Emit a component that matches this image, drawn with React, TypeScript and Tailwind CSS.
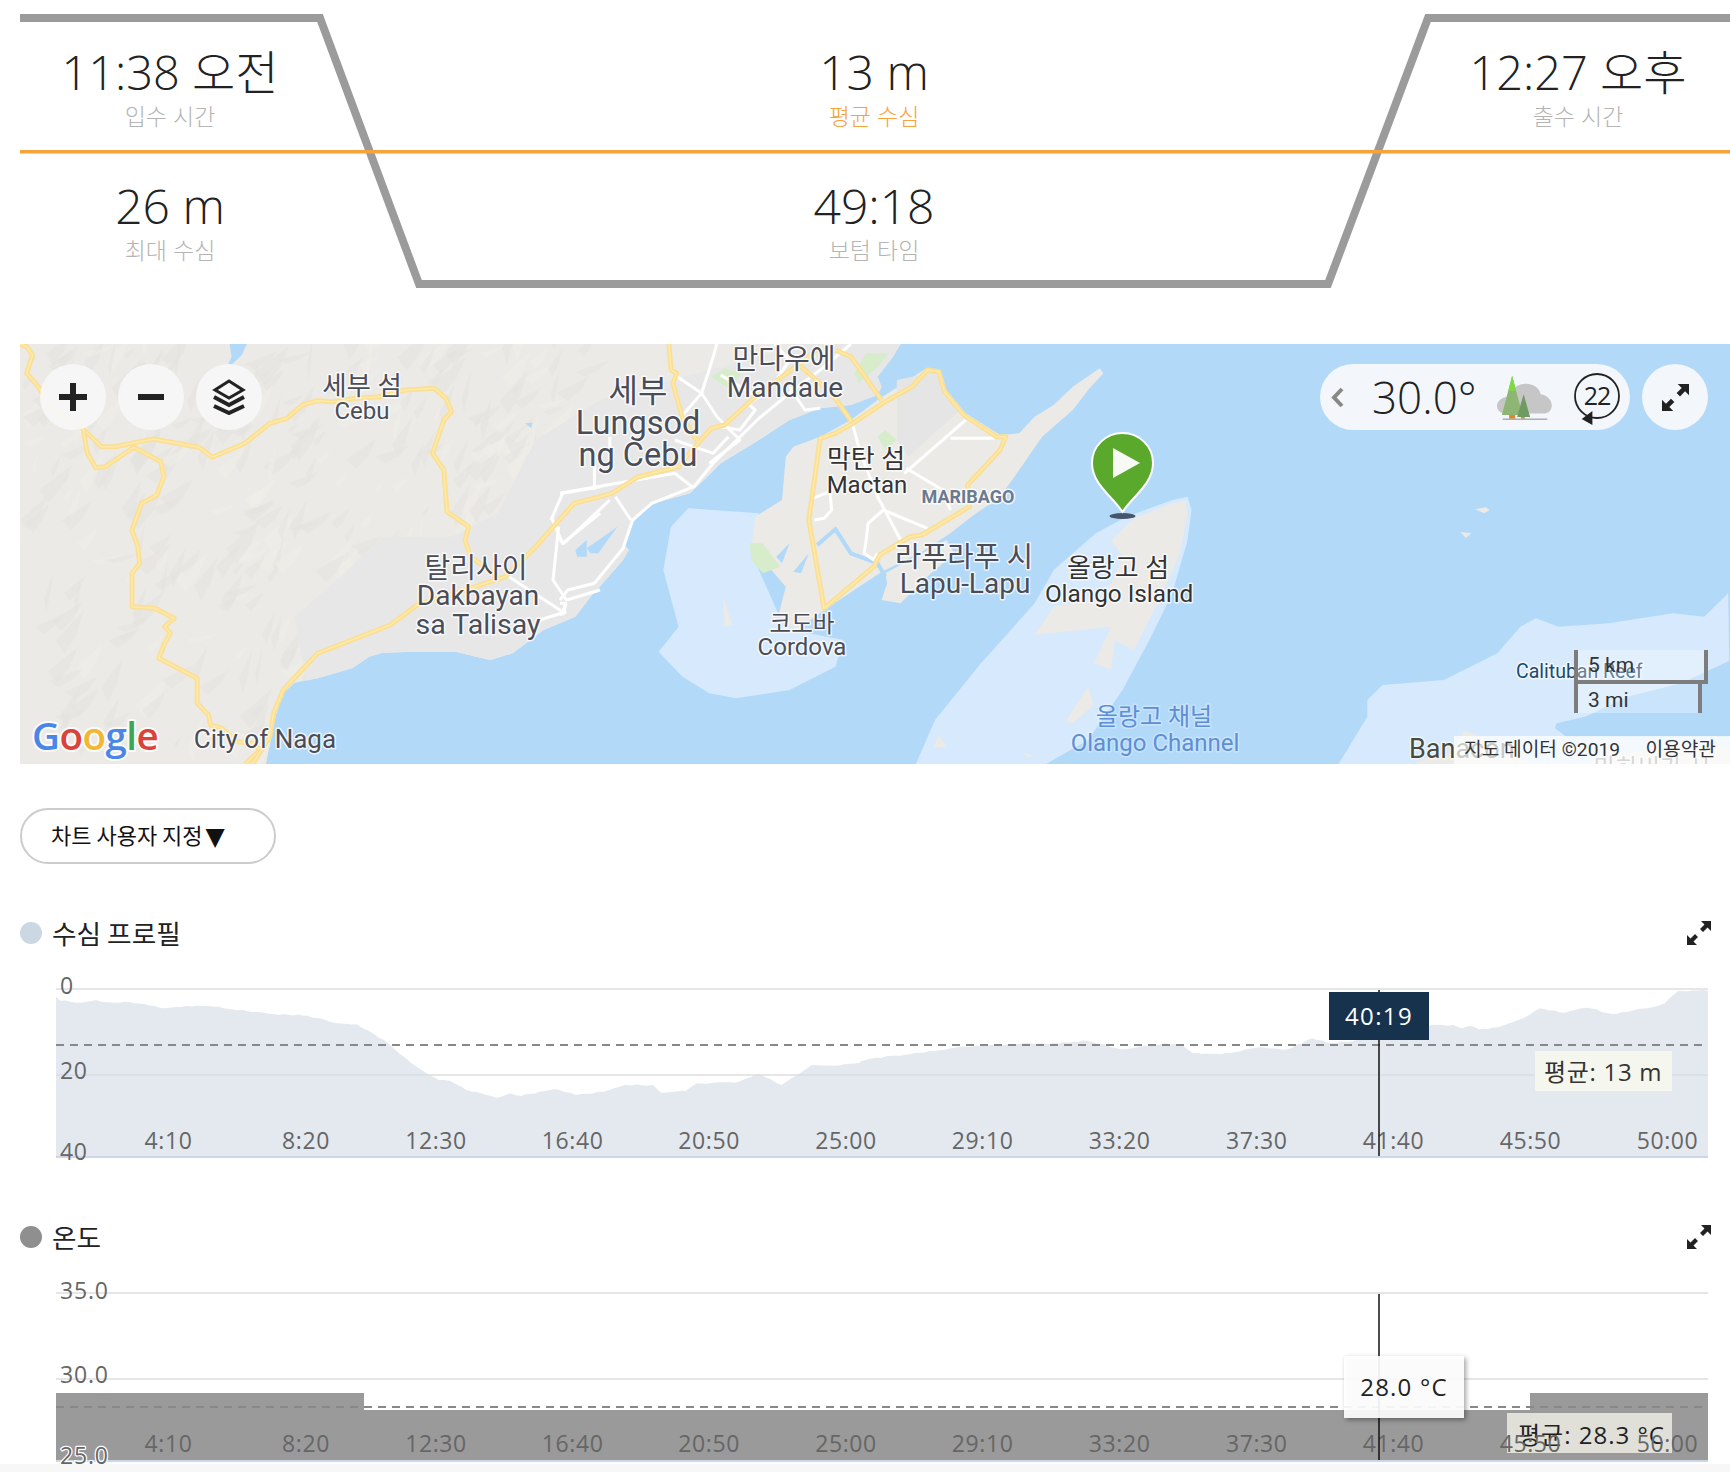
import React from "react";

const FONT = "'Open Sans','Noto Sans CJK KR',sans-serif";
const MAP_FONT = "Roboto,'Noto Sans CJK KR',sans-serif";

type Pt = number[];

// the map was traced from crops, so points come in crop coordinates
const P = (ox: number, pts: Pt[]) =>
  pts.map(([x, y]) => `${(ox + x / 2.613).toFixed(1)},${(340 + y / 3).toFixed(1)}`).join(" ");
const A = (pts: Pt[]) => P(0, pts);
const B = (pts: Pt[]) => P(560, pts);
const C = (pts: Pt[]) => P(1130, pts);

const seeded = (seed: number) => {
  let s = seed;
  return () => {
    s = (s * 16807) % 2147483647;
    return s / 2147483647;
  };
};

const cebuLand =
  "20,344 " +
  B([[890, 12], [870, 50], [830, 110], [840, 140], [830, 165], [760, 195], [680, 205], [600, 240], [520, 300], [420, 370], [385, 410], [340, 460], [230, 495], [190, 540], [165, 610], [180, 630], [165, 660], [100, 745], [80, 770], [40, 830], [0, 850]]) +
  " " +
  A([[1420, 870], [1340, 940], [1280, 960], [1190, 935], [1080, 935], [1000, 938], [965, 950], [920, 985], [830, 1015], [770, 1028], [740, 1060], [720, 1130], [695, 1272]]) +
  " 20,764";

const yellowRoads: string[] = [
  A([[52, 12], [70, 20], [85, 45], [70, 100], [100, 140], [130, 200], [215, 265], [265, 320], [300, 320], [400, 297], [520, 322], [555, 352], [640, 310], [705, 250], [750, 235], [790, 195], [830, 182], [870, 185], [930, 175], [990, 170], [1060, 150], [1135, 145], [1165, 175], [1180, 215], [1160, 240], [1130, 340], [1160, 390], [1168, 515], [1225, 560], [1215, 600], [1230, 650], [1300, 710]]),
  A([[218, 270], [228, 340], [250, 383], [275, 380], [350, 322], [420, 365], [428, 410], [410, 465], [370, 490], [345, 570], [360, 620], [365, 670], [345, 700], [345, 800], [405, 805], [455, 835], [430, 860], [445, 880], [430, 910], [415, 955], [515, 1015], [515, 1090], [545, 1125], [550, 1155], [580, 1165], [620, 1205], [660, 1210], [680, 1230], [640, 1272]]),
  A([[660, 1272], [705, 1190], [715, 1120], [740, 1050], [830, 940], [1020, 855], [1090, 795], [1230, 745], [1320, 710], [1400, 620], [1500, 490], [1568, 470]]),
  B([[104, 470], [135, 460], [205, 410], [310, 380], [360, 310], [395, 265], [430, 255], [510, 170], [610, 85], [640, 60], [680, 20]]),
  B([[285, 12], [290, 90], [305, 100], [295, 130], [320, 235], [360, 305]]),
  B([[720, 30], [760, 50], [840, 180]]),
  B([[630, 80], [710, 160], [765, 250]]),
  B([[680, 295], [720, 280], [765, 250], [850, 185], [920, 140], [960, 90], [990, 95], [1005, 155], [1055, 225], [1140, 290], [1165, 290], [1150, 330], [1065, 435], [1070, 500], [945, 585], [915, 590], [835, 645], [820, 680], [690, 805], [650, 540], [680, 295]]),
];

const whiteRoads: string[] = [
  B([[300, 105], [370, 160], [410, 230], [470, 300], [390, 370]]),
  B([[410, 12], [395, 70], [370, 160], [310, 240]]),
  B([[760, 12], [680, 90], [610, 150], [520, 235], [400, 370], [350, 440], [240, 490], [190, 540], [165, 625], [90, 730], [20, 750], [0, 780]]),
  B([[0, 460], [150, 430], [300, 400], [345, 440]]),
  B([[145, 470], [185, 540]]),
  B([[90, 380], [90, 450]]),
  B([[130, 290], [130, 380]]),
  B([[490, 190], [510, 210], [470, 270], [420, 260]]),
  B([[0, 600], [10, 610], [130, 480]]),
  B([[0, 790], [15, 790], [10, 820], [0, 825]]),
  B([[560, 12], [600, 60], [560, 130], [470, 215]]),
  B([[420, 105], [500, 160], [560, 130]]),
  B([[300, 300], [400, 340], [440, 290]]),
  B([[600, 140], [640, 210], [680, 205]]),
  B([[765, 255], [785, 340], [830, 470], [890, 600]]),
  B([[900, 400], [1060, 240]]),
  B([[1020, 295], [1135, 295]]),
  B([[905, 385], [1000, 450], [1020, 510]]),
  B([[660, 475], [705, 455], [710, 510], [690, 535], [665, 540]]),
  B([[800, 600], [805, 550], [845, 510], [960, 565]]),
  B([[800, 600], [795, 640], [820, 660], [830, 640]]),
  A([[1440, 540], [1470, 460], [1568, 440]]),
  A([[1440, 530], [1470, 610], [1568, 520]]),
  A([[1460, 560], [1445, 720], [1480, 780], [1568, 750]]),
  A([[1330, 710], [1470, 815], [1480, 790]]),
  A([[1410, 840], [1480, 815]]),
];

// hill shading is only texture, so a seeded scatter of small shards will do
function makeTerrain() {
  const r = seeded(17);
  const out: { pts: string; fill: string }[] = [];
  for (let i = 0; i < 420; i++) {
    const x = 20 + r() * 560;
    const y = 344 + Math.pow(r(), 1.2) * 410;
    const w = 6 + r() * 30;
    const h = 8 + r() * 30;
    out.push({
      pts: `${x.toFixed(0)},${y.toFixed(0)} ${(x + w).toFixed(0)},${(y - h * 0.8).toFixed(0)} ${(x + w * 0.7).toFixed(0)},${(y - h * 0.1).toFixed(0)} ${(x + w * 0.3).toFixed(0)},${(y + h * 0.4).toFixed(0)}`,
      fill: i % 3 === 0 ? "#f1efe8" : "#e3e3de",
    });
  }
  return out;
}
const terrain = makeTerrain();

const labels = [
  { t: "세부 섬", x: 362, y: 395, s: 26.5 },
  { t: "Cebu", x: 362, y: 419, s: 24 },
  { t: "탈리사이", x: 476, y: 578, s: 28 },
  { t: "Dakbayan", x: 478, y: 605, s: 28 },
  { t: "sa Talisay", x: 478, y: 634, s: 28.5 },
  { t: "City of Naga", x: 265, y: 748, s: 26 },
  { t: "세부", x: 638, y: 402, s: 32 },
  { t: "Lungsod", x: 638, y: 434, s: 32.5 },
  { t: "ng Cebu", x: 638, y: 466, s: 32.5 },
  { t: "만다우에", x: 784, y: 369, s: 28 },
  { t: "Mandaue", x: 785, y: 397, s: 28 },
  { t: "막탄 섬", x: 866, y: 468, s: 26, c: "#333" },
  { t: "Mactan", x: 867, y: 493, s: 24, c: "#333" },
  { t: "라푸라푸 시", x: 964, y: 567, s: 28.5 },
  { t: "Lapu-Lapu", x: 965, y: 593, s: 28 },
  { t: "올랑고 섬", x: 1118, y: 577, s: 26, c: "#333" },
  { t: "Olango Island", x: 1119, y: 602, s: 24.3, c: "#333" },
  { t: "코도바", x: 802, y: 632, s: 23.5 },
  { t: "Cordova", x: 802, y: 655, s: 24 },
];

function MapArt() {
  return (
    <svg viewBox="20 344 1710 420" width="1710" height="420" className="absolute inset-0 block">
      <defs>
        <clipPath id="cebu">
          <polygon points={cebuLand} />
        </clipPath>
      </defs>
      <rect x="20" y="344" width="1710" height="420" fill="#b3d9f9" />

      {/* shallows */}
      <polygon fill="#d6e9fd" points={B([[335, 505], [520, 520], [500, 640], [570, 820], [650, 880], [740, 900], [720, 980], [600, 1050], [460, 1075], [390, 1060], [320, 1010], [258, 935], [310, 860], [270, 690], [290, 560]])} />
      <polygon fill="#d6e9fd" points={B([[930, 1272], [980, 1140], [1100, 970], [1240, 790], [1290, 690], [1400, 580], [1480, 530], [1600, 480], [1640, 470], [1650, 510], [1640, 600], [1600, 760], [1540, 900], [1470, 1050], [1380, 1200], [1270, 1272]])} />
      <polygon fill="#d6e9fd" points={C([[545, 1272], [620, 1130], [620, 1080], [660, 1035], [820, 1020], [960, 940], [1020, 860], [1060, 835], [1120, 860], [1250, 850], [1420, 820], [1500, 830], [1563, 760], [1570, 1272]])} />
      <polygon fill="#b3d9f9" points={C([[1110, 1165], [1115, 1150], [1190, 1130], [1300, 1070], [1440, 1030], [1570, 960], [1570, 1190], [1320, 1190], [1140, 1190]])} />

      {/* cebu */}
      <polygon fill="#ebeae6" points={cebuLand} />
      <g clipPath="url(#cebu)">
        {terrain.map((t, i) => (
          <polygon key={i} points={t.pts} fill={t.fill} opacity="0.45" />
        ))}
        <polygon fill="#e7e7e8" points={A([[770, 830], [900, 700], [1000, 590], [1180, 590], [1300, 520], [1400, 300], [1568, 180], [2100, 12], [2600, 12], [2600, 1000], [800, 1030]])} />
        <polygon fill="#d6eccb" points={B([[395, 110], [430, 85], [475, 100], [440, 145], [420, 130]])} />
        <polygon fill="#d6eccb" points={B([[780, 130], [830, 80], [860, 40], [800, 40], [770, 100]])} />
      </g>
      <polygon fill="#b3d9f9" points={A([[600, 12], [645, 12], [632, 45], [590, 90], [605, 50]])} />
      <polygon fill="#b3d9f9" points={A([[1372, 250], [1392, 248], [1388, 264]])} />
      <polygon fill="#b3d9f9" points={B([[70, 625], [150, 560], [100, 640], [80, 640]])} />
      <polygon fill="#b3d9f9" points={B([[40, 630], [70, 600], [70, 650], [45, 650]])} />

      {/* mactan */}
      <polygon fill="#ebeae6" points={B([[610, 320], [680, 290], [760, 240], [830, 180], [950, 90], [990, 90], [1010, 150], [1060, 220], [1150, 285], [1200, 280], [1240, 230], [1290, 195], [1340, 140], [1410, 85], [1420, 100], [1380, 150], [1340, 210], [1260, 290], [1200, 390], [1150, 470], [1075, 530], [1020, 580], [940, 640], [850, 690], [835, 700], [690, 810], [620, 870], [570, 830], [590, 740], [500, 620], [510, 530], [580, 480], [590, 350]])} />
      <polygon fill="#ebeae6" points={B([[850, 700], [1010, 600], [1030, 640], [950, 720], [890, 790], [840, 780], [855, 730]])} />
      <polygon fill="#e5e5e5" points={B([[880, 120], [985, 95], [1040, 215], [910, 350], [880, 300]])} />
      <polygon fill="#d6eccb" points={B([[495, 610], [530, 610], [575, 680], [530, 700], [500, 660]])} />
      <polygon fill="#d6eccb" points={B([[830, 290], [850, 270], [880, 300], [850, 330]])} />
      <polyline points={B([[672, 615], [720, 568], [760, 640], [830, 670], [850, 710]])} fill="none" stroke="#b3d9f9" strokeWidth="4" />
      <polygon fill="#b3d9f9" points={B([[565, 650], [600, 610], [580, 670]])} />
      <polygon fill="#b3d9f9" points={B([[610, 695], [650, 640], [630, 700]])} />

      {/* olango */}
      <polygon fill="#ebeae6" points={B([[1440, 600], [1500, 535], [1600, 490], [1635, 482], [1640, 520], [1620, 640], [1590, 720], [1540, 840], [1500, 930], [1450, 900], [1440, 990], [1395, 970], [1440, 860], [1240, 885], [1290, 800], [1400, 770], [1440, 730], [1470, 650]])} />
      <polygon fill="#ebeae6" points={B([[1320, 1145], [1380, 1040], [1395, 1095], [1340, 1150]])} />
      <polygon fill="#ebeae6" points={B([[975, 1225], [990, 1185], [1010, 1220]])} />
      <polygon fill="#ebeae6" points={B([[1210, 1240], [1235, 1245], [1225, 1255]])} />
      <polygon fill="#ebeae6" points={B([[426, 765], [435, 800], [450, 855], [430, 860]])} />
      <polygon fill="#ebeae6" points={C([[902, 508], [930, 502], [940, 510], [925, 520]])} />
      <polygon fill="#ebeae6" points={C([[863, 576], [892, 580], [878, 594]])} />
      <polygon fill="#ebeae6" points={C([[740, 1272], [770, 1255], [850, 1240], [870, 1172], [895, 1180], [1050, 1272]])} />
      <polygon fill="#ebeae6" points={C([[1200, 1272], [1240, 1240], [1563, 1215], [1570, 1272]])} />

      {/* roads */}
      {whiteRoads.map((r, i) => (
        <polyline key={i} points={r} fill="none" stroke="#fff" strokeWidth="3" strokeLinejoin="round" />
      ))}
      {yellowRoads.map((r, i) => (
        <g key={i}>
          <polyline points={r} fill="none" stroke="#fbdf92" strokeWidth="5" strokeLinejoin="round" />
          <polyline points={r} fill="none" stroke="#fde9ae" strokeWidth="1.5" strokeLinejoin="round" />
        </g>
      ))}

      {/* place names */}
      <g fontFamily={MAP_FONT} textAnchor="middle" paintOrder="stroke" stroke="#ffffff" strokeOpacity="0.75" strokeWidth="3" strokeLinejoin="round">
        {labels.map((l) => (
          <text key={l.t} x={l.x} y={l.y} fontSize={l.s} fill={l.c ?? "#4a4d58"}>
            {l.t}
          </text>
        ))}
        <text x="968" y="503" fontSize="18" fontWeight="700" fill="#6b7a90">MARIBAGO</text>
        <text x="1154" y="725" fontSize="24" fill="#5d8fd6" strokeOpacity="0.3">올랑고 채널</text>
        <text x="1155" y="751" fontSize="24" fill="#5d8fd6" strokeOpacity="0.3">Olango Channel</text>
      </g>
      <g fontFamily={MAP_FONT} paintOrder="stroke" stroke="#ffffff" strokeOpacity="0.6" strokeWidth="3" strokeLinejoin="round">
        <text x="1516" y="678" fontSize="19.5" fill="#1d4a70">Calituban Reef</text>
        <text x="1409" y="758" fontSize="27" fill="#4a4a3c">Banacon</text>
        <text x="1652" y="776" fontSize="24" fill="#777" textAnchor="middle">마하비가 시</text>
      </g>

      {/* pin */}
      <ellipse cx="1122.5" cy="516" rx="13" ry="3" fill="#47556a" />
      <path d="M1122.5 512 C1112 496 1092 484 1092 463 C1092 446 1106 433 1122.5 433 C1139 433 1153 446 1153 463 C1153 484 1133 496 1122.5 512Z" fill="#5aa92d" stroke="#fff" strokeWidth="2" />
      <polygon points="1113,448 1140,463 1113,478" fill="#f7f9f5" />

      {/* google */}
      <text x="32" y="750" fontFamily="'Open Sans',sans-serif" fontSize="38.5" fontWeight="600" letterSpacing="-0.5" paintOrder="stroke" stroke="#ffffff" strokeOpacity="0.8" strokeWidth="4" strokeLinejoin="round">
        <tspan fill="#4a86e8">G</tspan>
        <tspan fill="#d9443a">o</tspan>
        <tspan fill="#f2b632">o</tspan>
        <tspan fill="#4a86e8">g</tspan>
        <tspan fill="#3ea653">l</tspan>
        <tspan fill="#d9443a">e</tspan>
      </text>
    </svg>
  );
}

function ExpandIcon({ className }: { className: string }) {
  return (
    <svg viewBox="0 0 24 24" className={className}>
      <path d="M14 0H24V10L20.5 6.5 16 11 13 8 17.5 3.5Z M10 24H0V14L3.5 17.5 8 13 11 16 6.5 20.5Z" fill="#222" />
    </svg>
  );
}

function RoundButton({ children }: { children: React.ReactNode }) {
  return <div className="flex h-[66px] w-[66px] items-center justify-center rounded-full bg-[#f7f7f7]/95">{children}</div>;
}

function WeatherIcon() {
  return (
    <svg viewBox="950 100 152 140" preserveAspectRatio="none" className="h-[47px] w-[58px]">
      <path d="M975 218 C945 212 950 170 985 168 C995 120 1060 115 1070 160 C1105 165 1110 218 1075 218Z" fill="#c6c6c6" />
      <rect x="987" y="222" width="16" height="11" fill="#e0862c" />
      <rect x="1018" y="226" width="10" height="7" fill="#e0862c" />
      <polygon points="995,105 1022,222 968,222" fill="#8fb574" />
      <polygon points="995,105 1005,150 985,150" fill="#7edb45" />
      <polygon points="1025,160 1042,228 1008,228" fill="#6f9a62" />
      <rect x="970" y="233" width="117" height="3" fill="#8a8a8a" />
    </svg>
  );
}

function CurrentIcon() {
  return (
    <svg viewBox="0 -3 48 56" className="h-14 w-12">
      <circle cx="24" cy="24" r="22" fill="none" stroke="#222" strokeWidth="1.8" />
      <polygon points="8.7,47 19.4,39 19.4,53" fill="#222" />
      <text x="24" y="33" textAnchor="middle" fontFamily="'Open Sans',sans-serif" fontSize="25" letterSpacing="-1" fill="#222">22</text>
    </svg>
  );
}

function MapPanel() {
  return (
    <div className="relative ml-5 h-[420px] w-[1710px] overflow-hidden">
      <MapArt />

      <div className="absolute left-5 top-5 flex gap-3">
        <RoundButton>
          <svg viewBox="0 0 28 28" className="h-7 w-7">
            <path d="M11 0h6v11h11v6H17v11h-6V17H0v-6h11z" fill="#222" />
          </svg>
        </RoundButton>
        <RoundButton>
          <div className="h-[6px] w-[26px] bg-[#222]" />
        </RoundButton>
        <RoundButton>
          <svg viewBox="0 0 34 36" className="h-9 w-[34px]">
            <path d="M17 2 L31 11 L17 19 L3 11Z" fill="none" stroke="#222" strokeWidth="3" />
            <path d="M2 18 L17 26 L32 18 M2 27 L17 34 L32 27" fill="none" stroke="#222" strokeWidth="4" />
          </svg>
        </RoundButton>
      </div>

      <div className="absolute right-[22px] top-5 flex gap-3">
        <div className="flex h-[66px] w-[310px] items-center rounded-full bg-[#f3f7fb] pl-[11px]">
          <svg viewBox="0 0 13 21" className="h-[21px] w-[13px]">
            <path d="M11 2 L3 10.5 L11 19" fill="none" stroke="#888" strokeWidth="4" />
          </svg>
          <span className="ml-[28px] w-[123px] text-[44px] font-light leading-none text-[#222]">30.0°</span>
          <WeatherIcon />
          <div className="ml-[20px]">
            <CurrentIcon />
          </div>
        </div>
        <div className="flex h-[66px] w-[66px] items-center justify-center rounded-full bg-[#f3f7fb]">
          <ExpandIcon className="h-[27px] w-[27px]" />
        </div>
      </div>

      {/* scale */}
      <div className="absolute left-[1554px] top-[306px] w-[134px] font-['Roboto',sans-serif] text-[21px] leading-none text-[#333]">
        <div className="flex h-[34px] items-center border-x-4 border-b-4 border-[#7d7d7d] bg-white/30 pl-[10px] pt-px">5 km</div>
        <div className="flex h-[29px] w-[128px] items-center border-x-4 border-[#7d7d7d] bg-white/30 pl-[10px] pt-[3px]">3 mi</div>
      </div>

      {/* attribution */}
      <div className="absolute bottom-0 right-0 flex h-7 w-[276px] items-center justify-between bg-white/70 pl-[10px] pr-[14px] font-['Roboto','Noto_Sans_CJK_KR',sans-serif] text-[19.2px] leading-none text-[#333]">
        <span>지도 데이터 ©2019</span>
        <span>이용약관</span>
      </div>
    </div>
  );
}

function Stat({ value, label, accent, korean }: { value: string; label: string; accent?: boolean; korean?: boolean }) {
  return (
    <div className="flex h-[88px] flex-col items-center">
      <div className={`h-14 font-light leading-[56px] whitespace-nowrap text-[#222] ${korean ? "text-[47px]" : "text-[48px]"}`}>{value}</div>
      <div className={`mt-px text-[23px] font-light leading-[30px] ${accent ? "text-[#f5a33b]" : "text-[#b4b4b4]"}`}>{label}</div>
    </div>
  );
}

function DiveSummary() {
  return (
    <section className="relative h-[344px]">
      <svg viewBox="0 0 1730 344" className="absolute inset-0 h-[344px] w-[1730px]">
        <polyline points="20,18 320,18 419,284 1328,284 1428,18 1730,18" fill="none" stroke="#9b9b9b" strokeWidth="8" />
        <line x1="20" y1="151.7" x2="1730" y2="151.7" stroke="#f5a33b" strokeWidth="3.5" />
      </svg>
      <div className="relative ml-5 grid w-[1708px] grid-cols-[300px_1fr_300px] gap-y-[46px] pt-11">
        <Stat value="11:38 오전" label="입수 시간" korean />
        <Stat value="13 m" label="평균 수심" accent />
        <Stat value="12:27 오후" label="출수 시간" korean />
        <Stat value="26 m" label="최대 수심" />
        <Stat value="49:18" label="보텀 타임" />
      </div>
    </section>
  );
}

const ticks = [
  { t: "4:10", x: 168.5 },
  { t: "8:20", x: 306 },
  { t: "12:30", x: 436 },
  { t: "16:40", x: 572.7 },
  { t: "20:50", x: 709.2 },
  { t: "25:00", x: 846 },
  { t: "29:10", x: 982.6 },
  { t: "33:20", x: 1119.7 },
  { t: "37:30", x: 1256.8 },
  { t: "41:40", x: 1393.5 },
  { t: "45:50", x: 1530.5 },
  { t: "50:00", x: 1667.5 },
];

const depthLeft: Pt[] = [[102, 620], [110, 632], [140, 638], [175, 630], [200, 637], [235, 636], [300, 655], [340, 648], [390, 650], [450, 663], [500, 672], [560, 677], [610, 698], [650, 703], [700, 750], [750, 820], [800, 870], [820, 872], [850, 900], [905, 923], [930, 910], [950, 918], [1010, 897], [1050, 915], [1100, 905], [1140, 885], [1190, 885], [1205, 908], [1250, 903], [1270, 880], [1340, 878], [1385, 852], [1425, 885], [1480, 825], [1520, 827], [1568, 818]];
const depthRight: Pt[] = [[0, 515], [30, 503], [90, 493], [170, 473], [280, 462], [340, 462], [410, 452], [470, 478], [550, 460], [580, 465], [600, 490], [650, 493], [720, 472], [770, 478], [815, 445], [850, 460], [950, 440], [1030, 405], [1070, 405], [1085, 415], [1100, 407], [1115, 418], [1150, 412], [1195, 385], [1225, 355], [1270, 368], [1310, 353], [1355, 372], [1420, 355], [1450, 340], [1475, 302], [1528, 302]];

// the traced outline is coarse, a little noise gives it the sampled look
function depthArea() {
  const r = seeded(41);
  const pts: Pt[] = [
    ...depthLeft.map(([x, y]) => [x / 1.823, 790 + y / 3]),
    ...depthRight.map(([x, y]) => [860 + x / 1.802, 890 + y / 3]),
  ];
  const out: string[] = ["56,1157"];
  for (let i = 0; i < pts.length - 1; i++) {
    const [x1, y1] = pts[i];
    const [x2, y2] = pts[i + 1];
    const steps = Math.max(1, Math.round((x2 - x1) / 5));
    for (let k = 0; k < steps; k++) {
      const f = k / steps;
      const noise = k === 0 ? 0 : (r() - 0.5) * 1.4;
      out.push(`${(x1 + (x2 - x1) * f).toFixed(1)},${(y1 + (y2 - y1) * f + noise).toFixed(1)}`);
    }
  }
  out.push(`${pts[pts.length - 1].join(",")}`, "1708,1157");
  return out.join(" ");
}

function Ticks({ y }: { y: number }) {
  return (
    <g fontFamily={FONT} fontSize="23" letterSpacing="0.6" textAnchor="middle" fill="#666">
      {ticks.map((t) => (
        <text key={t.t} x={t.x} y={y}>
          {t.t}
        </text>
      ))}
    </g>
  );
}

function DepthChart() {
  return (
    <svg viewBox="0 975 1730 190" className="block h-[190px] w-[1730px]">
      <line x1="56" y1="989" x2="1708" y2="989" stroke="#e6e6e6" strokeWidth="2" />
      <line x1="56" y1="1075" x2="1708" y2="1075" stroke="#e6e6e6" strokeWidth="2" />
      <polygon points={depthArea()} fill="#d6dde8" fillOpacity="0.65" />
      <line x1="56" y1="1157" x2="1708" y2="1157" stroke="#ccd6eb" strokeWidth="2" />
      <line x1="56" y1="1045" x2="1704" y2="1045" stroke="#888" strokeWidth="2" strokeDasharray="8 6" />
      <g fontFamily={FONT} fontSize="23" letterSpacing="0.6" fill="#666">
        <text x="60" y="994">0</text>
        <text x="60" y="1079">20</text>
        <text x="60" y="1160">40</text>
      </g>
      <Ticks y="1148.5" />
      <rect x="1535" y="1051" width="137" height="40" fill="#f5f6ee" />
      <text x="1544" y="1081" fontFamily={FONT} fontSize="24" letterSpacing="0.7" fill="#333">평균: 13 m</text>
      <line x1="1379" y1="990" x2="1379" y2="1156" stroke="#111" strokeWidth="1.5" />
      <rect x="1329" y="992" width="100" height="48" fill="#17324d" />
      <text x="1379" y="1025" textAnchor="middle" fontFamily={FONT} fontSize="24" letterSpacing="1.4" fill="#fff">40:19</text>
    </svg>
  );
}

function TempChart() {
  return (
    <svg viewBox="0 1279 1730 185" className="block h-[185px] w-[1730px]">
      <defs>
        <filter id="tipShadow" x="-10%" y="-20%" width="120%" height="140%">
          <feDropShadow dx="2" dy="2" stdDeviation="2.5" floodColor="#000" floodOpacity="0.4" />
        </filter>
      </defs>
      <line x1="56" y1="1293" x2="1708" y2="1293" stroke="#e6e6e6" strokeWidth="2" />
      <line x1="56" y1="1379" x2="1708" y2="1379" stroke="#e6e6e6" strokeWidth="2" />
      <polygon points="56,1461 56,1393 364,1393 364,1410 1530,1410 1530,1393 1708,1393 1708,1461" fill="#9a9a9a" />
      <line x1="56" y1="1461" x2="1708" y2="1461" stroke="#ccd6eb" strokeWidth="2" />
      <line x1="56" y1="1407" x2="1704" y2="1407" stroke="#888" strokeWidth="2" strokeDasharray="8 6" />
      <g fontFamily={FONT} fontSize="23" letterSpacing="0.8" fill="#666">
        <text x="60" y="1299">35.0</text>
        <text x="60" y="1383">30.0</text>
        <text x="60" y="1464" paintOrder="stroke" stroke="#fff" strokeWidth="2.5" strokeLinejoin="round">25.0</text>
      </g>
      <rect x="1507" y="1413" width="165" height="40" fill="#e0e0d8" />
      <text x="1518" y="1444" fontFamily={FONT} fontSize="24" letterSpacing="1" fill="#222">평균: 28.3 °C</text>
      <Ticks y="1452" />
      <line x1="1379" y1="1294" x2="1379" y2="1460" stroke="#111" strokeWidth="1.5" />
      <rect x="1344" y="1356" width="120" height="62" fill="#fff" fillOpacity="0.9" filter="url(#tipShadow)" />
      <text x="1404" y="1396" textAnchor="middle" fontFamily={FONT} fontSize="24" letterSpacing="1.2" fill="#222">28.0 °C</text>
    </svg>
  );
}

function ChartHeading({ title, dot }: { title: string; dot: string }) {
  return (
    <div className="flex h-[22px] items-center pl-5 pr-[19px]">
      <span className={`h-[22px] w-[22px] rounded-full ${dot}`} />
      <span className="ml-[10px] font-['Noto_Sans_CJK_KR',sans-serif] text-[26.7px] leading-[22px] text-[#222]">{title}</span>
      <ExpandIcon className="ml-auto h-6 w-6" />
    </div>
  );
}

export default function App() {
  return (
    <div className="h-[1472px] w-[1730px] overflow-hidden bg-white font-['Open_Sans','Noto_Sans_CJK_KR',sans-serif]">
      <DiveSummary />
      <MapPanel />

      <button className="ml-5 mt-11 flex h-14 w-[256px] items-center rounded-full border-2 border-[#cccccc] bg-white pb-1 pl-[29px] font-['Noto_Sans_CJK_KR',sans-serif] text-[22px] text-[#111]">
        차트 사용자 지정
        <span className="ml-[3px] mt-1 font-['DejaVu_Sans',sans-serif] text-[25px] leading-none">▼</span>
      </button>

      <div className="mt-[58px]">
        <ChartHeading title="수심 프로필" dot="bg-[#cbd8e4]" />
      </div>
      <div className="mt-[31px]">
        <DepthChart />
      </div>

      <div className="mt-[61px]">
        <ChartHeading title="온도" dot="bg-[#8f8f8f]" />
      </div>
      <div className="mt-[31px]">
        <TempChart />
      </div>
      <div className="h-2 bg-[#f7f7f7]" />
    </div>
  );
}
